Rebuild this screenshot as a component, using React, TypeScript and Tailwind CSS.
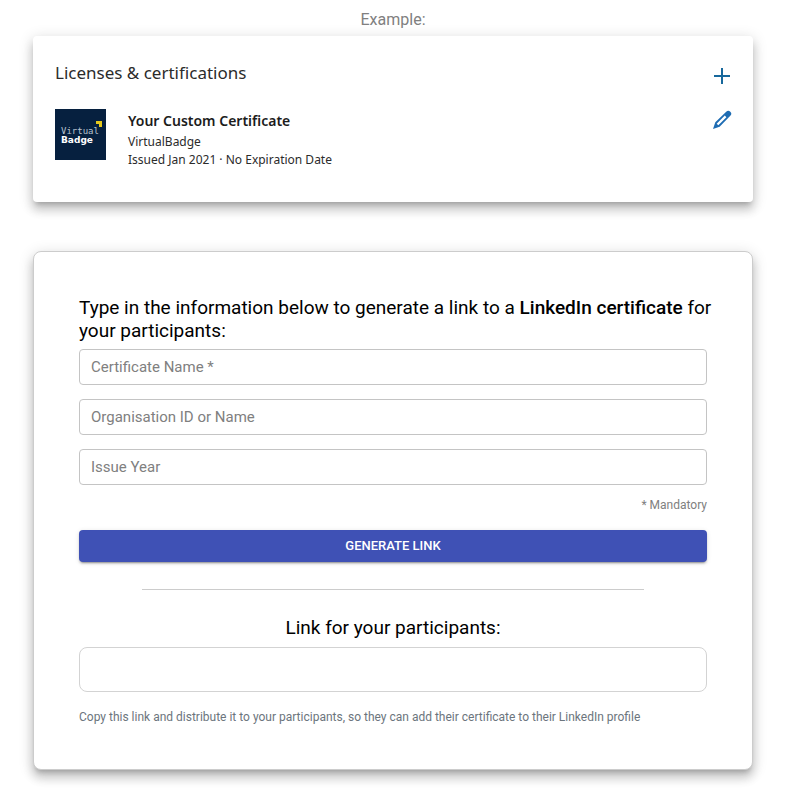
import { useState } from 'react';
import type { FormEvent } from 'react';

const cardShadow =
  'shadow-[0_5px_5px_-3px_rgba(0,0,0,0.2),0_8px_10px_1px_rgba(0,0,0,0.14),0_3px_14px_2px_rgba(0,0,0,0.12)]';

type FieldProps = {
  id: string;
  label: string;
  value: string;
  required?: boolean;
  onChange: (value: string) => void;
};

const Field = ({ id, label, value, required, onChange }: FieldProps) => (
  <div className="relative">
    <input
      id={id}
      type="text"
      placeholder=" "
      value={value}
      required={required}
      onChange={(e) => onChange(e.target.value)}
      className="peer block h-9 w-full rounded border border-[#c4c4c4] bg-white px-3 text-sm text-black outline-none focus:border-[#3f51b5]"
    />
    <label
      htmlFor={id}
      className="pointer-events-none absolute left-3 top-2 bg-white text-[15px] leading-5 text-[#808080] peer-focus:-top-2 peer-focus:px-1 peer-focus:text-xs peer-focus:text-[#3f51b5] peer-[:not(:placeholder-shown)]:-top-2 peer-[:not(:placeholder-shown)]:px-1 peer-[:not(:placeholder-shown)]:text-xs"
    >
      {label}
      {required && ' *'}
    </label>
  </div>
);

const BadgeLogo = () => (
  <svg viewBox="0 0 51 51" className="size-[51px] shrink-0">
    <rect width="51" height="51" fill="#06203f" />
    <path d="M41 12h6v6h-3v-3h-3z" fill="#e5c81c" />
    <text x="6" y="25" fontSize="9" fill="#b9c3cf" fontFamily="'DejaVu Sans Mono', monospace">
      Virtual
    </text>
    <text x="6" y="34" fontSize="9" fontWeight="700" fill="#ffffff" fontFamily="'DejaVu Sans', sans-serif">
      Badge
    </text>
  </svg>
);

const ExampleCard = () => (
  <section className={`flex justify-between rounded bg-white pt-[25px] pr-[19px] pb-[27px] pl-[22px] font-['Noto_Sans',sans-serif] text-[#2b2b2b] ${cardShadow}`}>
    <div>
      <h2 className="text-[17px] leading-6">Licenses &amp; certifications</h2>
      <div className="mt-6 flex gap-[22px] pb-[6px]">
        <BadgeLogo />
        <div className="text-xs leading-[18px]">
          <h3 className="text-sm leading-6 font-semibold text-[#1c1c1c]">Your Custom Certificate</h3>
          <p>VirtualBadge</p>
          <p>Issued Jan 2021 · No Expiration Date</p>
        </div>
      </div>
    </div>
    <div className="flex flex-col items-center gap-5 pt-[3px] text-[#1e6cb3]">
      <button type="button" aria-label="Add" className="size-6">
        <svg viewBox="0 0 24 24" className="size-6" fill="none" stroke="#17689c" strokeWidth="2">
          <path d="M12 4v16M4 12h16" />
        </svg>
      </button>
      <button type="button" aria-label="Edit" className="size-6">
        <svg viewBox="0 0 24 24" className="size-6" fill="currentColor">
          <path d="M20.300 3.700a2.900 2.900 0 0 0-4.100 0L5.300 14.300 3 21l6.600-2.300L20.300 7.800a2.900 2.900 0 0 0 0-4.100zM8.300 17.300l-1.600-1.600L14.800 7.600l1.600 1.600z" />
        </svg>
      </button>
    </div>
  </section>
);

const LinkForm = () => {
  const [name, setName] = useState('');
  const [organisation, setOrganisation] = useState('');
  const [year, setYear] = useState('');
  const [link, setLink] = useState('');

  const generateLink = (e: FormEvent) => {
    e.preventDefault();
    const params = new URLSearchParams({ startTask: 'CERTIFICATION_NAME', name });
    if (/^\d+$/.test(organisation)) params.set('organizationId', organisation);
    else if (organisation) params.set('organizationName', organisation);
    if (year) params.set('issueYear', year);
    setLink(`https://www.linkedin.com/profile/add?${params.toString()}`);
  };

  return (
    <form
      onSubmit={generateLink}
      className={`mt-[49px] rounded-lg border border-[#ccc] bg-white px-[45px] pt-11 pb-[43px] ${cardShadow}`}
    >
      <h2 className="-mr-2 text-[19px] leading-[23px] text-black">
        Type in the information below to generate a link to a <b className="font-medium">LinkedIn certificate</b> for
        your participants:
      </h2>
      <div className="mt-[7px] flex flex-col gap-[14px]">
        <Field id="certificate" label="Certificate Name" value={name} onChange={setName} required />
        <Field id="organisation" label="Organisation ID or Name" value={organisation} onChange={setOrganisation} />
        <Field id="year" label="Issue Year" value={year} onChange={setYear} />
      </div>
      <p className="mt-3 text-right text-xs leading-4 text-[#808080]">* Mandatory</p>
      <button
        type="submit"
        className="mt-[17px] block h-8 w-full rounded bg-[#3f51b5] text-[13px] font-medium text-white uppercase shadow-[0_3px_1px_-2px_rgba(0,0,0,0.2),0_2px_2px_0_rgba(0,0,0,0.14),0_1px_5px_0_rgba(0,0,0,0.12)]"
      >
        Generate Link
      </button>
      <hr className="mx-auto mt-[27px] w-4/5 border-[#ccc]" />
      <label htmlFor="link" className="mt-[26px] block text-center text-[19px] leading-[23px] text-black">
        Link for your participants:
      </label>
      <input
        id="link"
        type="text"
        readOnly
        value={link}
        className="mt-2 block h-[45px] w-full rounded-lg border border-[#d3d3d3] bg-white px-3 text-sm text-black outline-none"
      />
      <p className="mt-4 text-xs leading-[18px] text-[#6c757d]">
        Copy this link and distribute it to your participants, so they can add their certificate to their LinkedIn
        profile
      </p>
    </form>
  );
};

const App = () => {
  return (
    <main className="bg-white pt-2 pr-8 pb-9 pl-[33px] font-[Roboto,sans-serif]">
      <p className="mb-1 text-center text-base leading-6 text-[#808080]">Example:</p>
      <ExampleCard />
      <LinkForm />
    </main>
  );
};

export default App;
